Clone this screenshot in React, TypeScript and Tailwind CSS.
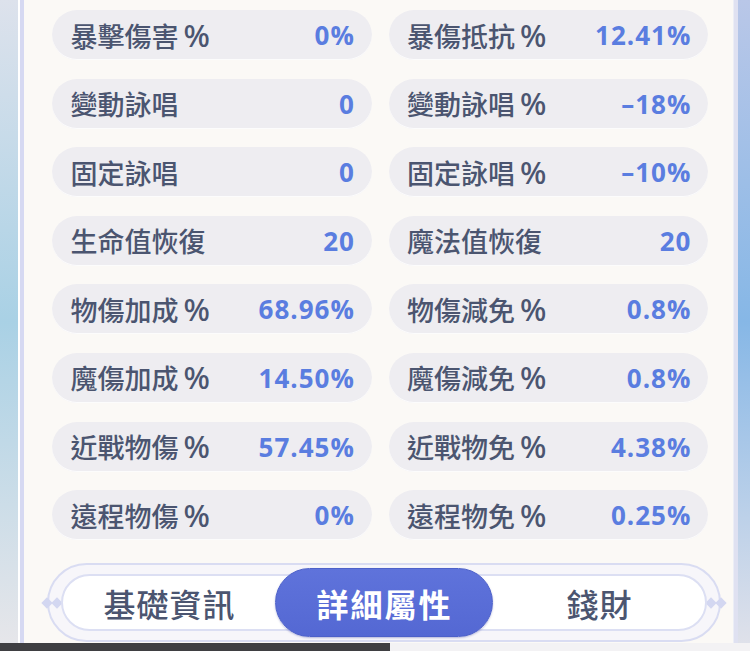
import React from 'react';

const STATS: [string, string, string, string][] = [
  ['暴擊傷害%', '0%', '暴傷抵抗%', '12.41%'],
  ['變動詠唱', '0', '變動詠唱%', '–18%'],
  ['固定詠唱', '0', '固定詠唱%', '–10%'],
  ['生命值恢復', '20', '魔法值恢復', '20'],
  ['物傷加成%', '68.96%', '物傷減免%', '0.8%'],
  ['魔傷加成%', '14.50%', '魔傷減免%', '0.8%'],
  ['近戰物傷%', '57.45%', '近戰物免%', '4.38%'],
  ['遠程物傷%', '0%', '遠程物免%', '0.25%'],
];

const labelFont = { fontFamily: '"Noto Sans CJK TC", "Noto Sans", sans-serif' };
const valueFont = { fontFamily: '"Open Sans", "Noto Sans CJK TC", sans-serif' };
const pctFont = { fontFamily: '"Noto Sans", "Open Sans", sans-serif' };

// split trailing % so it can get the wider latin glyph like in the game font
const Label: React.FC<{ text: string }> = ({ text }) => {
  const pct = text.endsWith('%');
  const body = pct ? text.slice(0, -1) : text;
  return (
    <span style={labelFont} className="text-[27px] font-medium text-[#4b5570] leading-none flex items-center">
      {body}
      {pct && (
        <span style={pctFont} className="ml-[5px] text-[31px] font-medium leading-none">
          %
        </span>
      )}
    </span>
  );
};

const StatPill: React.FC<{ label: string; value: string }> = ({ label, value }) => (
  <div className="h-[50px] rounded-full bg-[#eeedf1] shadow-[inset_0_-1px_0_rgba(255,255,255,0.8)] flex items-center justify-between pl-[18px] pr-[17px]">
    <Label text={label} />
    <span style={valueFont} className="text-[26px] font-bold text-[#5a7de0] tracking-[1px] leading-none">
      {value}
    </span>
  </div>
);

const Diamond: React.FC<{ className: string }> = ({ className }) => (
  <div className={`absolute w-[8px] h-[8px] rotate-45 bg-[#d3d7f1] ${className}`} />
);

const App: React.FC = () => {
  const tabs = ['基礎資訊', '詳細屬性', '錢財'];
  return (
    <div className="w-[750px] h-[651px] overflow-hidden flex flex-col bg-[#e4e4e8]">
      <div className="flex flex-1 min-h-0">
        {/* left backdrop */}
        <div className="w-[18px] bg-gradient-to-b from-[#dde2ec] via-[#a9d1e5] to-[#e6e6ea]" />
        <div className="w-[7px] bg-[#d6d9f2] border-l-2 border-white" />

        {/* panel */}
        <div className="flex-1 bg-[#fbf9f6] flex flex-col pl-[28px] pr-[25px] pt-[10px]">
          <div className="grid grid-cols-2 gap-x-[17px] gap-y-[18.6px]">
            {STATS.map(([l1, v1, l2, v2]) => (
              <React.Fragment key={l1}>
                <StatPill label={l1} value={v1} />
                <StatPill label={l2} value={v2} />
              </React.Fragment>
            ))}
          </div>

          {/* tab bar */}
          <div className="relative mt-[23px] ml-[-5px] mr-[-13px] h-[79px] rounded-full border-2 border-[#d9dcf2] bg-[#f7f6fa] flex items-center px-[12px]">
            <Diamond className="left-[-6px] top-[34px]" />
            <Diamond className="left-[4px] top-[34px]" />
            <Diamond className="right-[-6px] top-[34px]" />
            <Diamond className="right-[4px] top-[34px]" />
            <div className="relative flex-1 h-[57px] rounded-full border-2 border-[#dcdff3] bg-white flex items-center">
              {tabs.map((t, i) =>
                i === 1 ? (
                  <div
                    key={t}
                    className="w-[218px] h-[69px] -my-[6px] rounded-full bg-gradient-to-b from-[#5f73db] to-[#5468d3] shadow-[0_1px_2px_rgba(60,70,160,0.35)] border border-[#4d61c9] flex items-center justify-center"
                  >
                    <span style={labelFont} className="text-[32px] font-bold text-white tracking-[2px] leading-none">
                      {t}
                    </span>
                  </div>
                ) : (
                  <div key={t} className="w-[212px] flex items-center justify-center">
                    <span style={labelFont} className="text-[32px] font-medium text-[#4b5570] tracking-[1px] leading-none">
                      {t}
                    </span>
                  </div>
                )
              )}
            </div>
          </div>
        </div>

        {/* right backdrop */}
        <div className="w-[5px] bg-[#dfe1f1] border-l border-[#eceef6]" />
        <div className="w-[12px] bg-gradient-to-b from-[#b9c7e8] via-[#86b7e6] to-[#dfe1ea]" />
      </div>
      <div className="h-[8px] flex">
        <div className="w-[390px] bg-[#3f3f42]" />
        <div className="flex-1 bg-[#f3f2f4]" />
      </div>
    </div>
  );
};

export default App;
